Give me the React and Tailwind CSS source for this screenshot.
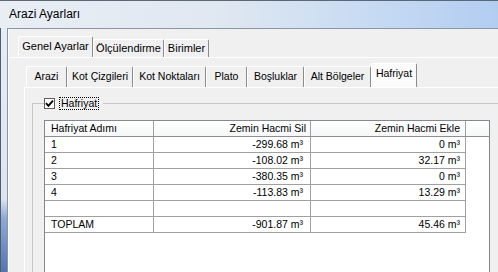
import React from 'react';

const outerTabs = [
  { label: 'Genel Ayarlar', w: 'w-[75px]', active: true },
  { label: 'Ölçülendirme', w: 'w-[71px]' },
  { label: 'Birimler', w: 'w-[45px]' },
];

const innerTabs = [
  { label: 'Arazi', w: 'w-[41px]' },
  { label: 'Kot Çizgileri', w: 'w-[66px]' },
  { label: 'Kot Noktaları', w: 'w-[73px]' },
  { label: 'Plato', w: 'w-[41px]' },
  { label: 'Boşluklar', w: 'w-[57px]' },
  { label: 'Alt Bölgeler', w: 'w-[67px]' },
  { label: 'Hafriyat', w: 'w-[46px]', active: true },
];

const rows = [
  ['1', '-299.68 m³', '0 m³'],
  ['2', '-108.02 m³', '32.17 m³'],
  ['3', '-380.35 m³', '0 m³'],
  ['4', '-113.83 m³', '13.29 m³'],
  ['', '', ''],
  ['TOPLAM', '-901.87 m³', '45.46 m³'],
];

function Tab({ label, w, active, small }) {
  return (
    <div
      className={`${w} shrink-0 flex items-center justify-center border-t border-l border-white border-r border-r-[#8c8c8c] rounded-t-[2px] ${
        active
          ? small
            ? 'h-[24px] bg-[#fbfbfb] pb-[3px]'
            : 'h-[21px] bg-[#f0f0f0] pb-[2px]'
          : small
          ? 'h-[21px] bg-[#f0f0f0]'
          : 'h-[18px] bg-[#f0f0f0]'
      }`}
    >
      {label}
    </div>
  );
}

export default function App() {
  return (
    <div className="w-[498px] h-[272px] overflow-hidden flex flex-col bg-[#f0f0f0] text-black font-['Liberation_Sans',Arial,sans-serif]">
      {/* title bar */}
      <div className="h-[28px] shrink-0 flex items-center pl-[9px] pb-[2px] text-[12px] border-t border-[#5a6878] bg-[linear-gradient(to_right,#e9eef5_0%,#dfe7f1_45%,#c6daf3_75%,#b3cdf1_100%)]">
        Arazi Ayarları
      </div>

      <div className="flex flex-1 min-h-0">
        {/* window frame */}
        <div className="w-[7px] shrink-0 border-l border-[#4f5c6c] bg-[linear-gradient(to_bottom,#e6edf5_0%,#dde5f0_70%,#8ea9d8_78%,#5475b0_100%)]" />

        {/* client area */}
        <div className="flex-1 min-w-0 flex flex-col border-t border-l border-[#8a96a6] bg-[#f0f0f0]">
          <div className="flex-1 flex flex-col border-l border-white pt-[7px]">
            {/* outer tabs */}
            <div className="flex items-end pl-[9px] text-[11px]">
              {outerTabs.map((t) => (
                <Tab key={t.label} {...t} />
              ))}
            </div>

            {/* outer pane */}
            <div className="flex-1 flex flex-col border-t border-white pl-[15px] pt-[5px]">
              {/* inner tabs */}
              <div className="flex items-end pl-[2px] text-[10.5px]">
                {innerTabs.map((t) => (
                  <Tab key={t.label} small {...t} />
                ))}
              </div>

              {/* inner pane */}
              <div className="flex-1 flex flex-col border-t border-l border-white pl-[7px] pt-[9px]">
                <fieldset className="flex-1 min-h-0 border-l border-t border-[#c9c9c9] pl-[11px] pt-[10px] text-[10.5px]">
                  <legend className="ml-0 pr-[4px] flex items-center gap-[4px] h-[13px]">
                    <span className="w-[11px] h-[11px] bg-white border border-[#5e5e5e] flex items-center justify-center">
                      <svg width="9" height="9" viewBox="0 0 9 9">
                        <path d="M1 4.2 L3.4 6.8 L8 1.6" fill="none" stroke="#000" strokeWidth="1.9" />
                      </svg>
                    </span>
                    <span className="border border-dotted border-black px-[1px] leading-[11px]">Hafriyat</span>
                  </legend>

                  {/* table */}
                  <div className="w-[446px] h-[200px] border border-[#828790] bg-white">
                    <div className="grid grid-cols-[109px_157px_155px_23px] h-[16px] border-b border-[#8e8e8e] bg-[linear-gradient(to_bottom,#ffffff,#f6f7f8)]">
                      <div className="border-r border-[#a0a0a0] pl-[6px] leading-[15px]">Hafriyat Adımı</div>
                      <div className="border-r border-[#a0a0a0] pr-[4px] text-right leading-[15px]">Zemin Hacmi Sil</div>
                      <div className="border-r border-[#a0a0a0] pr-[5px] text-right leading-[15px]">Zemin Hacmi Ekle</div>
                      <div />
                    </div>
                    {rows.map((r, i) => (
                      <div key={i} className="grid grid-cols-[109px_157px_155px] h-[16px] w-[421px] border-b border-[#a0a0a0]">
                        <div className="border-r border-[#a0a0a0] pl-[6px] leading-[15px]">{r[0]}</div>
                        <div className="border-r border-[#a0a0a0] pr-[7px] text-right leading-[15px]">{r[1]}</div>
                        <div className="border-r border-[#a0a0a0] pr-[5px] text-right leading-[15px]">{r[2]}</div>
                      </div>
                    ))}
                  </div>
                </fieldset>
              </div>
            </div>
          </div>
        </div>
      </div>
    </div>
  );
}
